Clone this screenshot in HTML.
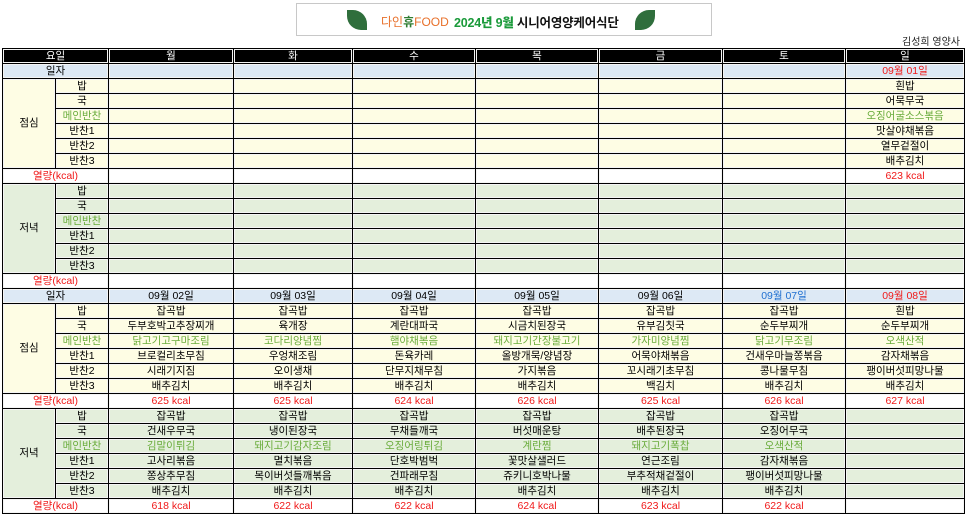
<!DOCTYPE html>
<html><head><meta charset="utf-8"><style>
body{margin:0;width:966px;height:515px;background:#fff;position:relative;overflow:hidden;font-family:"Liberation Sans","Noto Sans CJK KR",sans-serif;}
.banner{position:absolute;left:296px;top:3px;width:414px;height:31px;border:1px solid #c8c8c8;background:#fff;}
.banner .t{position:absolute;left:157px;top:8px;font-size:12.5px;font-weight:bold;color:#111;white-space:nowrap;letter-spacing:-0.2px}
.banner .t b{color:#1a9a3a}
.logo{position:absolute;left:84px;top:9px;font-size:12px;color:#e8702a;white-space:nowrap}
.logo span{color:#2f7d32;font-weight:bold}
.leaf{position:absolute;top:6px;width:20px;height:20px;background:#2f6e3c;border-radius:0 70% 0 70%;}
.name{position:absolute;right:6px;top:33px;font-size:10px;color:#222}
table{position:absolute;left:2px;top:48px;border-collapse:collapse;table-layout:fixed;font-size:10.5px;}
td{height:14px;padding:0;border:1px solid #000;text-align:center;white-space:nowrap;overflow:hidden;line-height:13px;box-shadow:inset 0 0 0 1px #f4f4f4;}
tr.h td{background:#000;color:#fff;border-color:#000}
tr.d td{background:#dde9f5}
tr.l td{background:#fefde4}
tr.n td{background:#e4efdc}
tr.k td{background:#fff;color:#f01818}
td.g{color:#6aac3c}
.blu{color:#1f6fd0}.red{color:#f01818}
</style></head><body>
<div class="banner">
<div class="leaf" style="left:50px"></div>
<div class="logo">다인<span>휴</span>FOOD</div>
<div class="t"><b>2024년 9월</b> 시니어영양케어식단</div>
<div class="leaf" style="left:338px;border-radius:70% 0 70% 0"></div>
</div>
<div class="name">김성희 영양사</div>
<table>
<colgroup><col style="width:53px"><col style="width:53px"><col style="width:125px"><col style="width:119px"><col style="width:123px"><col style="width:123px"><col style="width:124px"><col style="width:123px"><col style="width:119px"></colgroup>
<tr class="h"><td colspan="2">요일</td><td>월</td><td>화</td><td>수</td><td>목</td><td>금</td><td>토</td><td>일</td></tr>
<tr class="d"><td colspan="2">일자</td><td></td><td></td><td></td><td></td><td></td><td></td><td class="red">09월 01일</td></tr>
<tr class="l"><td rowspan="6">점심</td><td>밥</td><td></td><td></td><td></td><td></td><td></td><td></td><td>흰밥</td></tr>
<tr class="l"><td>국</td><td></td><td></td><td></td><td></td><td></td><td></td><td>어묵무국</td></tr>
<tr class="l"><td class="g">메인반찬</td><td></td><td></td><td></td><td></td><td></td><td></td><td class="g">오징어굴소스볶음</td></tr>
<tr class="l"><td>반찬1</td><td></td><td></td><td></td><td></td><td></td><td></td><td>맛살야채볶음</td></tr>
<tr class="l"><td>반찬2</td><td></td><td></td><td></td><td></td><td></td><td></td><td>열무겉절이</td></tr>
<tr class="l"><td>반찬3</td><td></td><td></td><td></td><td></td><td></td><td></td><td>배추김치</td></tr>
<tr class="k"><td colspan="2">열량(kcal)</td><td></td><td></td><td></td><td></td><td></td><td></td><td>623 kcal</td></tr>
<tr class="n"><td rowspan="6">저녁</td><td>밥</td><td></td><td></td><td></td><td></td><td></td><td></td><td></td></tr>
<tr class="n"><td>국</td><td></td><td></td><td></td><td></td><td></td><td></td><td></td></tr>
<tr class="n"><td class="g">메인반찬</td><td></td><td></td><td></td><td></td><td></td><td></td><td></td></tr>
<tr class="n"><td>반찬1</td><td></td><td></td><td></td><td></td><td></td><td></td><td></td></tr>
<tr class="n"><td>반찬2</td><td></td><td></td><td></td><td></td><td></td><td></td><td></td></tr>
<tr class="n"><td>반찬3</td><td></td><td></td><td></td><td></td><td></td><td></td><td></td></tr>
<tr class="k"><td colspan="2">열량(kcal)</td><td></td><td></td><td></td><td></td><td></td><td></td><td></td></tr>
<tr class="d"><td colspan="2">일자</td><td>09월 02일</td><td>09월 03일</td><td>09월 04일</td><td>09월 05일</td><td>09월 06일</td><td class="blu">09월 07일</td><td class="red">09월 08일</td></tr>
<tr class="l"><td rowspan="6">점심</td><td>밥</td><td>잡곡밥</td><td>잡곡밥</td><td>잡곡밥</td><td>잡곡밥</td><td>잡곡밥</td><td>잡곡밥</td><td>흰밥</td></tr>
<tr class="l"><td>국</td><td>두부호박고추장찌개</td><td>육개장</td><td>계란대파국</td><td>시금치된장국</td><td>유부김칫국</td><td>순두부찌개</td><td>순두부찌개</td></tr>
<tr class="l"><td class="g">메인반찬</td><td class="g">닭고기고구마조림</td><td class="g">코다리양념찜</td><td class="g">햄야채볶음</td><td class="g">돼지고기간장불고기</td><td class="g">가자미양념찜</td><td class="g">닭고기무조림</td><td class="g">오색산적</td></tr>
<tr class="l"><td>반찬1</td><td>브로컬리초무침</td><td>우엉채조림</td><td>돈육카레</td><td>올방개묵/양념장</td><td>어묵야채볶음</td><td>건새우마늘쫑볶음</td><td>감자채볶음</td></tr>
<tr class="l"><td>반찬2</td><td>시래기지짐</td><td>오이생채</td><td>단무지채무침</td><td>가지볶음</td><td>꼬시래기초무침</td><td>콩나물무침</td><td>팽이버섯피망나물</td></tr>
<tr class="l"><td>반찬3</td><td>배추김치</td><td>배추김치</td><td>배추김치</td><td>배추김치</td><td>백김치</td><td>배추김치</td><td>배추김치</td></tr>
<tr class="k"><td colspan="2">열량(kcal)</td><td>625 kcal</td><td>625 kcal</td><td>624 kcal</td><td>626 kcal</td><td>625 kcal</td><td>626 kcal</td><td>627 kcal</td></tr>
<tr class="n"><td rowspan="6">저녁</td><td>밥</td><td>잡곡밥</td><td>잡곡밥</td><td>잡곡밥</td><td>잡곡밥</td><td>잡곡밥</td><td>잡곡밥</td><td></td></tr>
<tr class="n"><td>국</td><td>건새우무국</td><td>냉이된장국</td><td>무채들깨국</td><td>버섯매운탕</td><td>배추된장국</td><td>오징어무국</td><td></td></tr>
<tr class="n"><td class="g">메인반찬</td><td class="g">김말이튀김</td><td class="g">돼지고기감자조림</td><td class="g">오징어링튀김</td><td class="g">계란찜</td><td class="g">돼지고기폭찹</td><td class="g">오색산적</td><td></td></tr>
<tr class="n"><td>반찬1</td><td>고사리볶음</td><td>멸치볶음</td><td>단호박범벅</td><td>꽃맛살샐러드</td><td>연근조림</td><td>감자채볶음</td><td></td></tr>
<tr class="n"><td>반찬2</td><td>쫑상추무침</td><td>목이버섯들깨볶음</td><td>건파래무침</td><td>쥬키니호박나물</td><td>부추적채겉절이</td><td>팽이버섯피망나물</td><td></td></tr>
<tr class="n"><td>반찬3</td><td>배추김치</td><td>배추김치</td><td>배추김치</td><td>배추김치</td><td>배추김치</td><td>배추김치</td><td></td></tr>
<tr class="k"><td colspan="2">열량(kcal)</td><td>618 kcal</td><td>622 kcal</td><td>622 kcal</td><td>624 kcal</td><td>623 kcal</td><td>622 kcal</td><td></td></tr>
</table>
</body></html>
